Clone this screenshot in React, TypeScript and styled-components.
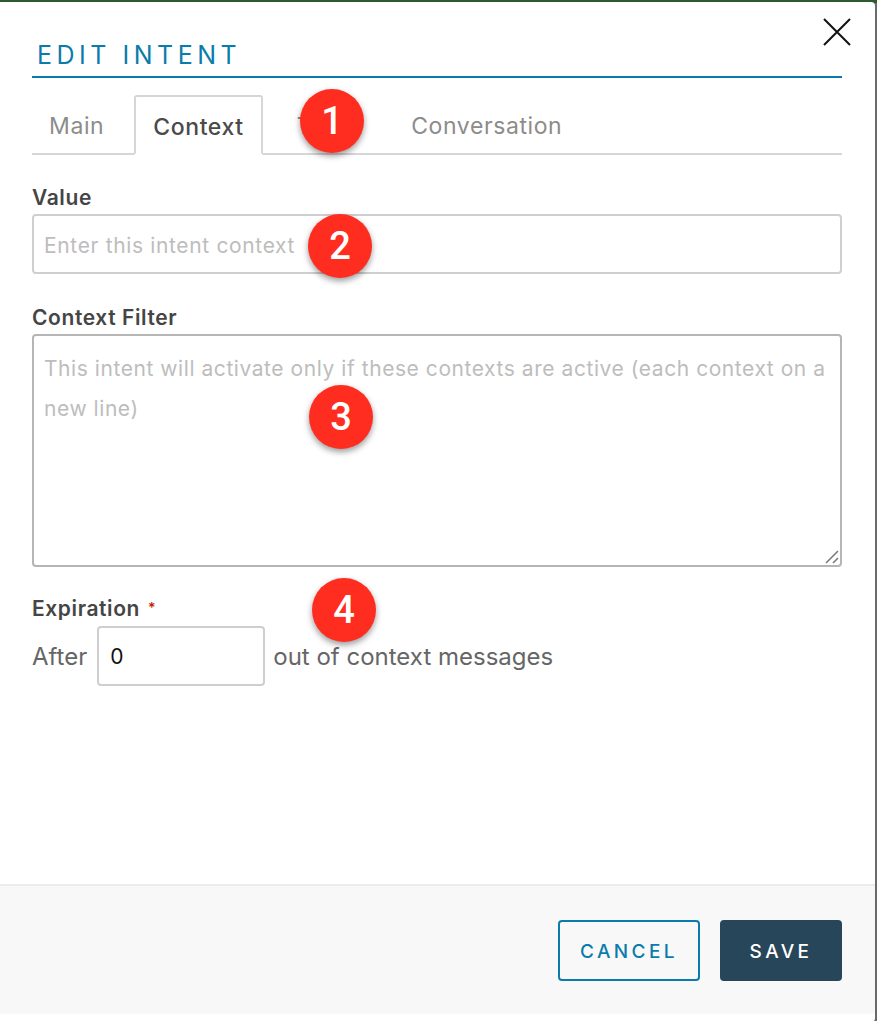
import styled, { createGlobalStyle } from 'styled-components';

const GlobalStyle = createGlobalStyle`
  html, body {
    margin: 0;
    padding: 0;
    background: #ffffff;
  }
  body {
    font-family: Inter, "Open Sans", "Liberation Sans", sans-serif;
  }
`;

const Backdrop = styled.div`
  width: 877px;
  height: 1024px;
  box-sizing: border-box;
  padding: 2px 2px 2px 0;
  background: linear-gradient(to bottom, #2e5a33 0, #2e5a33 3px, #6a6a6a 3px, #6a6a6a 1021px, #ffffff 1021px);
`;

const Modal = styled.div`
  position: relative;
  height: 100%;
  display: flex;
  flex-direction: column;
  box-sizing: border-box;
  padding-bottom: 8px;
  background: #ffffff;
  border-radius: 0 4px 4px 0;
  overflow: hidden;
`;

const CloseButton = styled.button`
  position: absolute;
  top: 16px;
  right: 24px;
  width: 28px;
  height: 28px;
  padding: 0;
  border: none;
  background: none;
  display: flex;
`;

const Body = styled.div`
  flex: 1;
  padding: 39px 33px 0 32px;
`;

const Title = styled.h2`
  margin: 0;
  height: 37px;
  box-sizing: border-box;
  border-bottom: 2px solid #0a7cab;
  color: #0a7cab;
  font-size: 25px;
  line-height: 28px;
  font-weight: 400;
  letter-spacing: 4.5px;
  padding-left: 5px;
`;

const Tabs = styled.div`
  display: flex;
  height: 60px;
  margin-top: 17px;
  border-bottom: 2px solid #d6d6d6;
  box-sizing: border-box;
`;

const Tab = styled.div<{ $active?: boolean; $gap?: number }>`
  position: relative;
  height: ${(p) => (p.$active ? 60 : 58)}px;
  box-sizing: border-box;
  padding: 4px 17px 0;
  margin-left: ${(p) => p.$gap ?? 0}px;
  display: flex;
  align-items: center;
  font-size: 23px;
  letter-spacing: 0.6px;
  color: ${(p) => (p.$active ? '#4a4a4a' : '#8c8c8c')};
  font-weight: ${(p) => (p.$active ? 500 : 400)};
  background: #ffffff;
  border: ${(p) => (p.$active ? '2px solid #d6d6d6' : 'none')};
  border-bottom: ${(p) => (p.$active ? '2px solid #ffffff' : 'none')};
  border-radius: 3px 3px 0 0;
`;

const Field = styled.div<{ $top: number }>`
  margin-top: ${(p) => p.$top}px;
`;

const Label = styled.label`
  display: block;
  height: 31px;
  color: #454545;
  font-size: 21px;
  line-height: 29px;
  font-weight: 600;
  letter-spacing: 0.6px;
`;

const Required = styled.span`
  color: #c92100;
  font-size: 14px;
  margin-left: 8px;
  vertical-align: 3px;
`;

const TextInput = styled.div`
  height: 60px;
  box-sizing: border-box;
  border: 2px solid #cfcfcf;
  border-radius: 4px;
  padding: 2px 10px 0;
  display: flex;
  align-items: center;
  font-size: 21px;
  letter-spacing: 0.65px;
  color: #bdbdbd;
`;

const TextArea = styled.div`
  position: relative;
  height: 233px;
  box-sizing: border-box;
  border: 2px solid #b5b5b5;
  border-radius: 4px;
  padding: 13px 10px;
  font-size: 21px;
  letter-spacing: 0.56px;
  line-height: 40px;
  color: #bdbdbd;
`;

const ResizeGrip = styled.svg`
  position: absolute;
  right: 1px;
  bottom: 1px;
  width: 14px;
  height: 14px;
`;

const ExpirationRow = styled.div`
  display: flex;
  align-items: center;
  margin-top: 2px;
  font-size: 24px;
  color: #666666;
`;

const NumberBox = styled.div`
  width: 168px;
  height: 60px;
  box-sizing: border-box;
  margin: 0 8px 0 10px;
  border: 2px solid #cfcfcf;
  border-radius: 4px;
  padding: 0 11px;
  display: flex;
  align-items: center;
  font-size: 21px;
  color: #111111;
`;

const Footer = styled.div`
  height: 130px;
  box-sizing: border-box;
  border-top: 2px solid #ececec;
  background: #f8f8f8;
  padding: 34px 33px 0 0;
  display: flex;
  justify-content: flex-end;
  gap: 20px;
`;

const Button = styled.button<{ $primary?: boolean }>`
  width: ${(p) => (p.$primary ? 122 : 142)}px;
  height: 61px;
  box-sizing: border-box;
  padding: 2px 0 0;
  border-radius: 4px;
  border: 2px solid ${(p) => (p.$primary ? '#28465a' : '#0a7cab')};
  background: ${(p) => (p.$primary ? '#28465a' : 'transparent')};
  color: ${(p) => (p.$primary ? '#ffffff' : '#0a7cab')};
  font-family: inherit;
  font-size: 19px;
  font-weight: 500;
  letter-spacing: 3.4px;
`;

const Badge = styled.div<{ $x: number; $y: number }>`
  position: absolute;
  left: ${(p) => p.$x}px;
  top: ${(p) => p.$y}px;
  width: 64px;
  height: 64px;
  border-radius: 50%;
  background: #ff2d1f;
  box-shadow: 0 3px 6px rgba(0, 0, 0, 0.4);
  color: #ffffff;
  font-family: Roboto, "Liberation Sans", sans-serif;
  font-size: 38px;
  font-weight: 500;
  display: flex;
  align-items: center;
  justify-content: center;
`;

export default function App() {
  return (
    <>
      <GlobalStyle />
      <Backdrop>
        <Modal>
          <CloseButton aria-label="Close">
            <svg width="28" height="28" viewBox="0 0 28 28">
              <path d="M1 1 L27 27 M27 1 L1 27" stroke="#111" strokeWidth="2" fill="none" />
            </svg>
          </CloseButton>
          <Body>
            <Title>EDIT INTENT</Title>
            <Tabs>
              <Tab>Main</Tab>
              <Tab $active $gap={13}>Context</Tab>
              <Tab $gap={17}>T</Tab>
              <Tab $gap={65}>Conversation</Tab>
            </Tabs>
            <Field $top={28}>
              <Label>Value</Label>
              <TextInput>Enter this intent context</TextInput>
            </Field>
            <Field $top={29}>
              <Label>Context Filter</Label>
              <TextArea>
                This intent will activate only if these contexts are active (each context on a new line)
                <ResizeGrip viewBox="0 0 14 14">
                  <path d="M1 13 L13 1 M8 13 L13 8" stroke="#777" strokeWidth="1.5" fill="none" />
                </ResizeGrip>
              </TextArea>
            </Field>
            <Field $top={26}>
              <Label>Expiration<Required>*</Required></Label>
              <ExpirationRow>
                After
                <NumberBox>0</NumberBox>
                out of context messages
              </ExpirationRow>
            </Field>
          </Body>
          <Footer>
            <Button>CANCEL</Button>
            <Button $primary>SAVE</Button>
          </Footer>
          <Badge $x={300} $y={87}>1</Badge>
          <Badge $x={308} $y={212}>2</Badge>
          <Badge $x={309} $y={383}>3</Badge>
          <Badge $x={312} $y={576}>4</Badge>
        </Modal>
      </Backdrop>
    </>
  );
}
